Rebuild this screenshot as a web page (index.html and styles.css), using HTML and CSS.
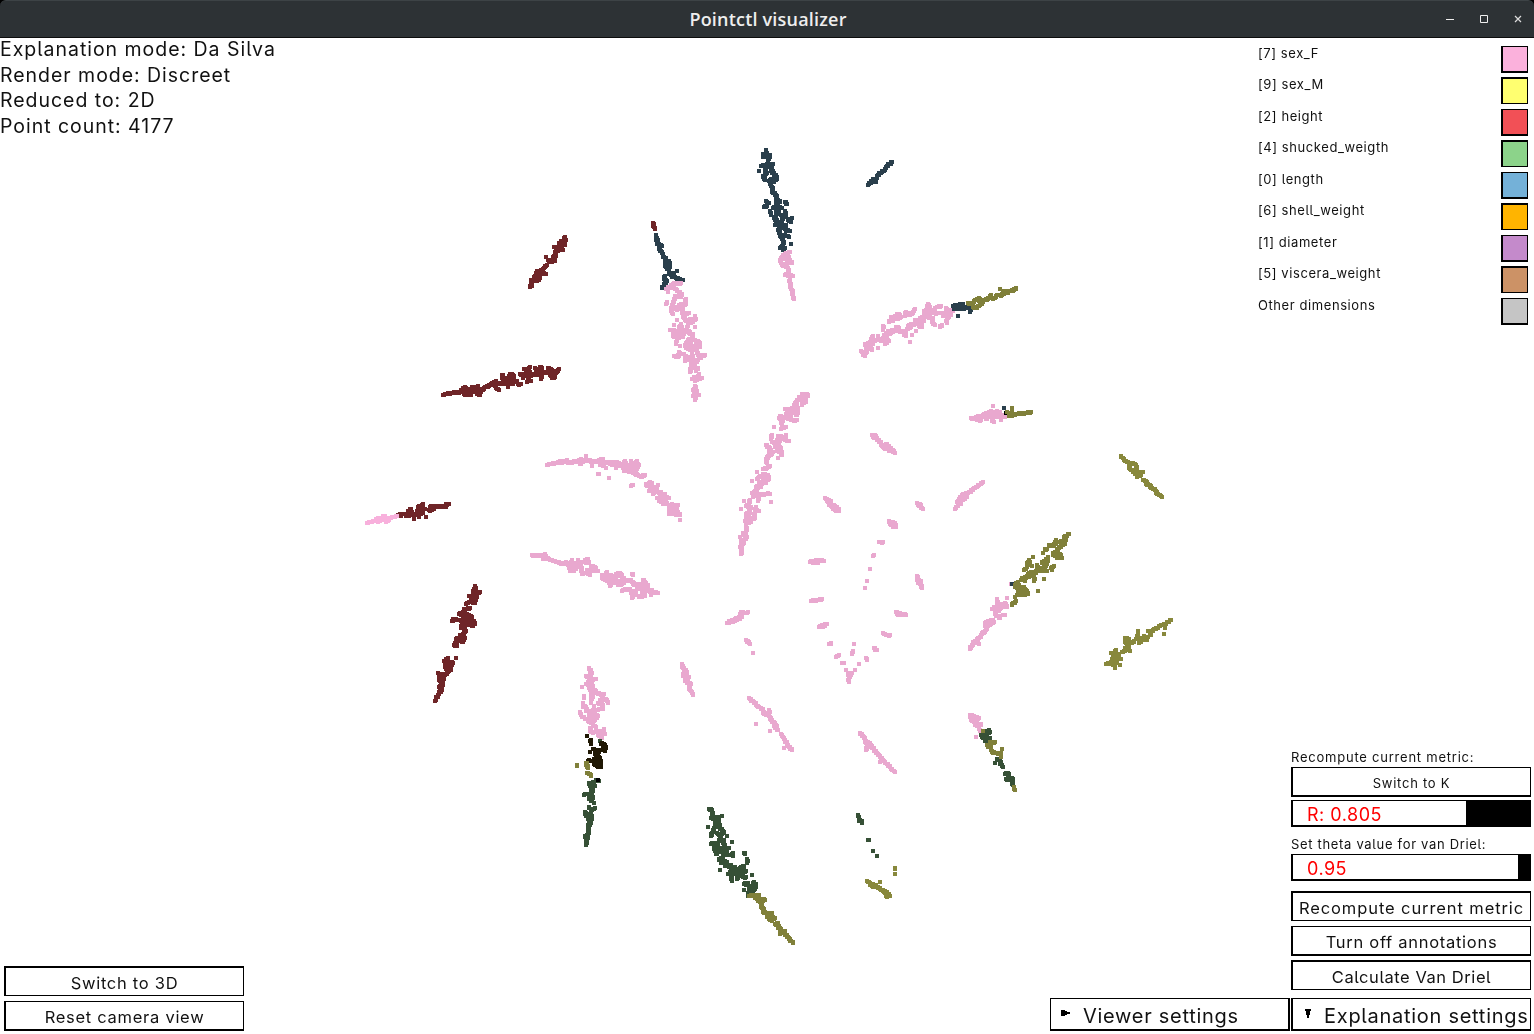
FILE: index.html
```html
<!DOCTYPE html>
<html lang="en">
<head>
<meta charset="utf-8">
<title>Pointctl visualizer</title>
<link rel="stylesheet" href="styles.css">
</head>
<body>
<div class="window">
  <header class="titlebar">
    <h1 class="title">Pointctl visualizer</h1>
    <div class="controls">
      <svg width="10" height="10" viewBox="0 0 10 10"><path d="M1 5.5h8" stroke="#eee" fill="none"/></svg>
      <svg width="10" height="10" viewBox="0 0 10 10"><path d="M1.5 1.5h7v7h-7z" stroke="#eee" fill="none"/></svg>
      <svg width="10" height="10" viewBox="0 0 10 10"><path d="M2 2l6 6M8 2l-6 6" stroke="#ddd" stroke-width="1.2" fill="none"/></svg>
    </div>
  </header>
  <main class="viewer">
    <canvas class="plot" id="plot" width="1534" height="996"></canvas>
    <section class="left">
      <div class="status">
        <p>Explanation mode: Da Silva</p>
        <p>Render mode: Discreet</p>
        <p>Reduced to: 2D</p>
        <p>Point count: 4177</p>
      </div>
      <div class="camera">
        <button class="btn odd">Switch to 3D</button>
        <button class="btn">Reset camera view</button>
      </div>
    </section>
    <section class="right">
      <ul class="legend">
        <li><span>[7] sex_F</span><i class="swatch pink"></i></li>
        <li><span>[9] sex_M</span><i class="swatch yellow"></i></li>
        <li><span>[2] height</span><i class="swatch red"></i></li>
        <li><span>[4] shucked_weigth</span><i class="swatch green"></i></li>
        <li><span>[0] length</span><i class="swatch blue"></i></li>
        <li><span>[6] shell_weight</span><i class="swatch orange"></i></li>
        <li><span>[1] diameter</span><i class="swatch purple"></i></li>
        <li><span>[5] viscera_weight</span><i class="swatch brown"></i></li>
        <li><span>Other dimensions</span><i class="swatch grey"></i></li>
      </ul>
      <div class="settings">
        <p class="label">Recompute current metric:</p>
        <button class="btn small">Switch to K</button>
        <div class="slider radius"><span>R: 0.805</span></div>
        <p class="label theta-label">Set theta value for van Driel:</p>
        <div class="slider theta"><span>0.95</span></div>
        <div class="actions">
          <button class="btn odd recompute">Recompute current metric</button>
          <button class="btn">Turn off annotations</button>
          <button class="btn odd calculate">Calculate Van Driel</button>
        </div>
      </div>
      <div class="menus">
        <button class="menu viewer-menu"><svg width="9" height="9" viewBox="0 0 9 9" shape-rendering="crispEdges"><path d="M0 0h4v1h2v1h3v2H6v1H4v1H0z"/></svg><span>Viewer settings</span></button>
        <button class="menu explain-menu"><svg width="7" height="11" viewBox="0 0 7 11" shape-rendering="crispEdges"><path d="M0 0h6v2H5v4H4v3H2V6H1V2H0z"/></svg><span>Explanation settings</span></button>
      </div>
    </section>
  </main>
</div>
<script src="plot.js"></script>
</body>
</html>
```
FILE: styles.css
```css
* { box-sizing: border-box; margin: 0; padding: 0; }
body { background: #fff; color: #111; font-family: Inter, "Liberation Sans", sans-serif; font-feature-settings: "cv05"; overflow: hidden; }
.window { width: 1534px; height: 1034px; display: flex; flex-direction: column; background: #000; }
.titlebar { height: 38px; flex: none; display: grid; grid-template-columns: 1fr auto 1fr; align-items: center; background: #2d3235; border-top: 1px solid #3d4346; border-bottom: 1px solid #0c0d0d; border-radius: 6px 6px 0 0; }
.title { grid-column: 2; font: 600 18px/36px "Open Sans", sans-serif; color: #eee; letter-spacing: 0.2px; margin-left: 2px; }
.controls { justify-self: end; display: flex; gap: 24px; padding-right: 11px; }
.controls svg { display: block; }
.viewer { flex: 1; position: relative; display: flex; justify-content: space-between; background: #fff; }
.plot { position: absolute; left: 0; top: 0; }
.left, .right { position: relative; display: flex; flex-direction: column; justify-content: space-between; padding-bottom: 3px; }
.status { font-size: 19.5px; line-height: 25.5px; letter-spacing: 0.97px; margin-top: -1px; }
.status p { white-space: nowrap; }
.camera { display: flex; flex-direction: column; gap: 5px; padding-left: 4px; }
.btn { display: flex; align-items: center; justify-content: center; width: 240px; height: 30px; background: #fff; border: solid #000; border-width: 1px 1px 2px 2px; font: inherit; font-size: 16.5px; letter-spacing: 0.72px; color: #111; white-space: nowrap; padding-top: 3px; }
.btn.odd { border-width: 2px 1px 1px 2px; }
.btn.small { font-size: 13px; letter-spacing: 0.75px; }
.btn.recompute { letter-spacing: 0.9px; }
.btn.calculate { letter-spacing: 0.55px; }
.right { align-items: flex-end; padding-right: 3px; }
.legend { list-style: none; width: 273px; padding: 8px 3px 0 0; font-size: 13px; letter-spacing: 0.58px; }
.legend li { display: flex; justify-content: space-between; align-items: flex-start; height: 31px; }
.legend li:nth-child(even) { height: 32px; }
.legend span { line-height: 15px; }
.swatch { width: 27px; height: 27px; border: solid #000; border-width: 1px 1px 2px 2px; }
.legend li:nth-child(even) .swatch { border-width: 2px 1px 1px 2px; }
.pink { background: #fbb1dc; }
.yellow { background: #ffff70; }
.red { background: #f25056; }
.green { background: #8cd38a; }
.blue { background: #74b1d8; }
.orange { background: #ffb400; }
.purple { background: #c48acb; }
.brown { background: #cc9266; }
.grey { background: #c5c5c5; }
.settings { width: 240px; margin-top: auto; margin-bottom: 8px; }
.label { font-size: 13px; line-height: 18px; letter-spacing: 0.77px; white-space: nowrap; margin-bottom: 1px; }
.theta-label { margin-top: 8px; letter-spacing: 0.68px; }
.slider { height: 27px; border: solid #000; border-width: 1px 1px 2px 2px; padding-left: 14px; color: #f00; font-size: 18px; line-height: 28px; letter-spacing: 0.5px; }
.slider.radius { margin-top: 3px; background: linear-gradient(90deg, #fff 173px, #000 173px); }
.slider.theta { background: linear-gradient(90deg, #fff 225px, #000 225px); }
.actions { display: flex; flex-direction: column; gap: 4.5px; margin-top: 10px; }
.menus { display: flex; gap: 1px; }
.menu { width: 240px; height: 33px; display: flex; align-items: center; background: #fff; border: solid #000; border-width: 1px 1px 2px 2px; font: inherit; font-size: 20px; letter-spacing: 0.72px; color: #111; white-space: nowrap; }
.menu span { padding-top: 4px; }
.viewer-menu { border-width: 1px 2px 2px 1px; padding-left: 10px; gap: 13px; }
.explain-menu { padding-left: 12px; gap: 12px; }
```
FILE: plot.js
```js
// Each group: colour, origin in window pixels, strands. Strand coordinates are
// thirds of a pixel from the origin; a lone coordinate is a single point.
const PINK = '#e9a8cf', NAVY = '#2a3f4c', RED = '#6f2528', OLIVE = '#80803a', OLIVE2 = '#88883c', GREEN = '#365036';
const groups = [
[NAVY,640,140,"378,30 378,42 370,42 370,50 384,46 390,45 384,60;363,78 378,74 398,72 390,82 398,92;378,78 376,90 380,98 370,108 376,120;357,93;392,92 402,102 410,112 402,126 394,118 388,124 396,140 396,150 400,158 410,168 410,182 420,182 408,196 400,204;378,184 386,190;372,201 380,198;435,186 441,192;426,203 414,200;390,213 394,225;408,214 418,214 408,228 402,234 414,246 405,255;435,213 437,226 424,226 437,232;456,234 444,240 453,245;428,238 422,248 427,262 416,264 418,280 422,290 430,300 432,310;438,256 437,272 449,273;432,284 446,291;453,312;430,316 421,324 436,324 430,330"],
[PINK,640,140,"450,336 436,342 426,350 421,363 430,378 440,378;446,350 450,362 455,370 442,366 440,352;444,384 447,394 436,405 448,405 459,408;449,414 451,440 456,450 458,470 461,478"],
[RED,640,140,"39,248 40,256 43,260 45,267"],
[NAVY,640,140,"48,285 48,300 54,300 52,312 66,318 56,322 62,334 68,342 70,352 78,354 74,364 76,378 82,388 90,380 87,364;86,398 98,405 110,416 128,420;111,393;98,400 96,412;75,408 74,420 81,423 72,435 66,444"],
[PINK,640,140,"78,447 90,440 98,432 110,429 124,429;84,456;98,444 108,448 116,456 126,462 124,470;112,468 104,472 102,482 98,490 92,510 98,522;80,486 77,492;138,478 137,492 126,500 116,508 104,508 124,492;128,502 126,514 130,524 146,519;130,530 138,542 150,545;111,540;165,529 165,540 154,548 148,540 156,536;102,555;90,570 102,570 102,590 98,580;124,552 118,562 126,562 118,574 116,582;165,561;144,555 140,566 134,574 146,574 150,582 158,582 160,594;132,578 128,590;120,590 110,598 107,612;120,618;146,596 140,606 134,618 144,626;152,604 150,616 166,620 156,632 148,628;166,600 178,606 180,622;168,612 170,634 176,648 182,654 186,646 195,645;118,636 118,644 114,651 102,648;128,642 138,648 134,663;150,650 148,660;156,640 158,655 152,668 156,680 150,690 150,696;168,666 174,660;168,684 174,684 168,694;166,672;177,702 176,714 187,714;156,717 166,712 170,720 164,722;165,738 168,748 160,750 166,760 176,765;172,752;158,768 168,772 165,780"],
[NAVY,640,140,"756,66 748,72 740,78 734,90 722,98 714,106 708,120 700,116 708,126 694,124 684,134"],
[PINK,640,140,"664,632 674,648 668,640 678,638 682,624 676,612 690,608 694,596 700,588;696,630 688,620 698,612;714,588 714,600 702,600 696,608;728,594 722,604 740,598 746,604 734,612 740,604;714,624;732,590 740,578 752,572 762,574 776,572 786,576 796,572 798,588 792,584;730,570 730,558;744,576 742,586 752,580;746,546 754,540 752,532 762,530 770,524 778,522 784,532 772,536;758,544;768,560 776,564;798,516 796,528 806,520 816,522 824,508 820,520 802,524;816,585;810,606;828,573;812,562 800,566 812,552 820,556 828,552 838,548;824,540 836,540 846,532 852,540 844,552 846,562 836,558;852,522 852,512 862,512 864,492 870,504 870,520 864,530 858,522 872,534 880,534 876,546 884,556;882,510 890,502 902,498;880,520 892,520;900,561 906,555;920,548 920,536 926,530 934,522;918,504 920,512 930,512 940,512;900,520 912,520 908,528 920,524"],
[NAVY,640,140,"939,498 968,492 954,500 966,506 980,500 990,506 990,516;942,508 950,504 976,504;954,528"],
[OLIVE,640,140,"984,490 998,492 1002,484 1018,474 1016,484 1030,486 1020,494 1008,504 1000,500;1030,480 1044,478 1054,464 1050,474 1066,474 1072,464 1086,466 1092,460;1080,447;1090,452 1094,460 1104,458 1108,452 1122,450 1128,444"],
[RED,360,210,"615,80 612,90 618,90 606,92 598,100 602,108 615,104 596,108;609,120;582,111 596,112 594,122 584,126 588,138 580,142 586,152 570,156 564,150;558,141;560,164 552,174 548,180 536,182 528,188 540,190 558,192;522,200 534,200 540,204 530,212 520,212 514,210 516,224 510,230"],
[RED,360,210,"249,555 262,551 276,549 290,546 298,549 306,540 315,531 318,540 312,552 324,552 333,555;336,530 336,542 354,528 352,540 346,546 360,543 360,555 350,552;322,546 332,536 344,536 368,540 374,531 386,528 394,522 408,513 404,526 408,534 417,540;412,520 428,522 436,516 428,506 426,498 430,494;438,510 446,500 451,492 460,496 462,508 450,508 444,520 432,520;444,532;438,522 450,520 460,522 456,514 472,513;474,522 484,522;480,492 492,494 488,504;492,477 504,480 510,471;500,490 510,486 508,500 498,492;501,516;513,513;504,504 516,492 530,492 528,480 524,474;534,492 543,496 543,507;540,471 546,474 540,484 550,490 562,486 570,484 564,474 574,477 576,490 570,496 578,500 576,504 585,500;588,490 582,486;597,477 592,486 586,482"],
[RED,360,210,"267,882 258,882 258,890 246,888 234,890 222,888 212,888 214,900 206,900 222,896;189,882 188,890 174,890 184,900 170,904 172,912 160,912 154,904 153,897 144,906 138,918 150,916 164,912;180,912 189,909;162,927;177,921;198,921;196,898;130,913 120,912 122,918 114,914"],
['#f8b0dc',360,210,"21,939 32,936 42,934 54,924 54,936 66,930 70,918 78,924 78,936 84,932 90,924 100,921 111,917"],
[PINK,360,210,"561,765 572,762 584,760 594,758 600,752 606,760 620,750 620,757 640,756 656,754 662,748 660,762 668,756;678,738;666,750 680,750 696,754 714,754 728,746 730,756 720,764 732,766;696,768;738,774;738,758 752,756 770,756 778,762 790,764 795,753 798,768;768,774;750,762 764,764 784,768 796,784 808,776 820,766 812,754;831,753 828,764 837,765 830,778 818,786 826,792 834,796 842,800 855,795;806,766 800,782 812,786 822,774;714,792 717,792;747,804;813,828 819,825;858,822 860,828 870,816 876,822 874,832 882,832;894,825;868,843 880,838 890,836 886,844 879,852;892,846 904,846 900,856 914,852;891,864 902,864 914,862 927,864;898,874 910,870 920,878 912,882 904,876;936,882 928,890 942,890 954,885;928,900 940,896 950,900 960,915 948,914 938,906 928,912;946,908;960,930"],
[PINK,420,540,"336,45 350,46 366,48 375,43 376,54 370,56 388,56 398,62 412,66 428,72 438,66 444,74;456,60 454,70 446,78 450,92 462,92 456,84 468,86 474,78 462,74 468,68;474,60;480,72 488,66 504,58 504,68 494,66;482,92;486,102 500,96 510,104;502,90 516,90 514,78 526,80 524,92 534,94;480,78 486,88;546,105 548,118 560,120 568,126 570,137 576,124 566,114 560,104 561,96;572,104 578,114 588,106 594,100 600,100 606,104 592,108 582,122;606,120 612,114;594,136 606,132 618,122 630,120 640,126 642,134;635,102 639,104;588,128 600,122;606,153 618,147 630,147;632,160 640,154 648,160 640,166 636,174;654,132 660,138 650,144 664,144 672,150 666,156;669,120 676,126 684,138 682,148 674,156 668,168 658,171;692,150 698,156 714,159;675,168;693,165;662,132 672,140 690,156"],
[RED,420,540,"165,138 166,148 158,152 166,156 180,156;147,168 160,168 172,166 168,176 164,180 152,180 164,190;138,192 148,186;150,204 138,207 132,207;136,216 118,222 130,224;96,243 102,237 114,240 126,240 138,234 128,230;140,222 154,228 156,240 166,249 156,258 142,252 130,250 122,264 134,262 136,276 130,282;142,244 148,236 134,244 148,256;120,286 134,294 130,306 116,300 106,308 104,318 112,316;108,296 118,298;108,354;84,354 78,360 72,362 86,366 100,368 94,376 74,374 78,386 94,386 82,398 76,404 66,402;84,380;54,399;58,412 70,408 70,420 58,420 66,430 70,436 58,440 66,450 56,460 60,452 54,468 48,476 45,483"],
[PINK,420,540,"507,384 512,394 514,404 508,414 498,408;527,417 516,420 506,424 504,436 516,430 520,444 508,444 514,456;486,441;499,432;492,468 492,474;524,450 528,458 540,462 552,462 546,474 540,484 552,480 558,478 564,489;512,468 520,462 514,480 512,490;490,490 488,500 498,500 498,512;522,498;534,490 546,492 549,506;480,516 484,526 488,532 498,537 508,537 508,524 514,512 526,512 536,508;520,524 534,528 524,540 512,548 504,544 518,534;518,556 528,562;510,564 512,576 524,576 534,572 542,576;552,567 548,578 556,582;534,584 542,590 546,594"],
[GREEN,420,540,"541,603"],
['#201804',420,540,"501,588;512,600 514,612;544,611 552,612 558,621 554,632 548,624;518,627 528,632 540,630 532,640 524,642;510,636;504,662 518,664 528,652 540,654 532,664 544,670 542,680 534,680 522,672 544,662;534,644 534,676"],
[OLIVE,420,540,"471,674 471,679;498,668 502,676 504,684;497,672;500,700 510,702 513,708"],
[GREEN,420,540,"528,719 537,723;510,728 522,728;507,729 512,740 524,738 512,750 520,746 512,760 508,776 520,770 512,784;492,765 498,763;522,789;507,801 514,810 525,804;495,816 498,828 510,826 514,820 516,838 506,832 510,850 514,846 504,860 504,884 494,891 504,890 498,902 498,914"],
['#000',420,540,"534,720"],
[PINK,420,540,"786,372 788,384 794,390 802,396 798,410 806,412 798,422 806,430 812,432 806,446 812,452 818,462 820,465;792,396 790,408;796,412 796,422"],
[PINK,690,380,"335,42 350,43 354,48 342,54 330,50 328,58 348,62 336,74;322,60 316,70 312,80 304,88 286,87 298,92;320,76 324,90 322,106 314,96 300,98 290,96 286,110 298,116 312,122 322,120;304,108;272,108 266,114 280,120 274,130 280,140 274,147 288,141;252,141;246,165 243,177;288,165 282,176 290,182 297,183;264,168 276,170 260,180 270,182 262,192 246,186;228,196 240,203 230,200;256,200 272,204 260,214 272,214 276,225;264,234;244,210 236,216 250,216 246,222 234,228 228,243 232,249;240,258 232,264 220,268;201,276;186,303;218,282 234,286 238,298 228,300 218,292 206,290 202,296;208,308 216,306 214,318 206,314 198,322 212,322;228,310;186,340 198,344 214,342 228,342 240,341;200,330 192,336 190,350;204,356 204,364 208,350;242,366;162,363;153,388;180,360 176,374 168,378 184,380 176,390 180,400 168,402 178,408;198,381 196,392 207,393;192,402 192,417;168,410 180,414 174,428 184,426 166,424;168,436 168,458 158,460 170,472 162,480 152,484;150,471;162,490 152,494 154,510 153,522"],
[PINK,690,380,"546,165 554,165 560,176 572,186 576,198 588,198 582,204 598,208 606,212 614,220;548,171 558,174;572,192 588,204 600,214;588,192 600,204 612,213;406,354 412,362 420,372 430,376 436,388 446,392;411,356 424,366;416,370 428,384 438,392;432,376 446,388;681,369 688,378 698,387;684,372 692,376;596,424 604,430 610,436 618,440;600,432 608,440;608,426 617,436;567,486 579,486;551,525 550,528;540,567;531,603;525,624;879,306 868,314 860,320 850,328 840,336 828,340 822,350 814,356 808,366 804,376 796,386;818,342 802,366 812,372;832,348 820,360;360,546 372,542 386,542 402,543;370,548 384,548;363,663 374,661 386,659 396,657;681,588 682,600 694,602 684,608 694,614 696,624;618,697 630,700 648,705;621,702 632,704;579,760 590,765 600,765;388,740 400,736 410,732;394,740 404,738;418,793 424,790;438,830 446,825;457,849 461,849;492,792;489,813 486,822;552,804 560,811;528,834 531,840;507,853;495,870;486,880 480,886 474,880 480,892 476,892 477,906;468,870;112,729 124,722 134,718 144,714 152,706 154,696 164,700 174,697;146,710;128,726 144,718 156,712;168,780 178,786 180,792;170,786 176,790;189,819"],
[PINK,690,380,"843,114 856,114 864,108 876,108;862,120 874,120;880,106 892,100 904,94 906,106 890,110 888,118;909,78;906,120 911,126;912,96 930,96 920,102 914,112 928,108 938,104;933,120;936,110 946,112;922,94 908,114;880,112 900,104 916,106"],
[NAVY,690,380,"942,84"],
['#000',690,380,"948,99"],
[OLIVE,690,380,"966,84;951,96;966,96 964,102;957,108 968,104 980,102 994,100 1008,99 1022,96"],
[PINK,950,440,"142,478 142,490;171,474;127,507 138,500 150,494 164,490 172,500 160,498 150,506 138,504 136,514 146,512;136,522 142,528 150,534;160,525 166,525;128,540 118,542 108,546 106,558 120,554 132,546;110,566 104,576 96,578 92,590 84,594 80,602 70,606 82,610 88,612;70,614 64,620 60,627;183,432"],
[NAVY,950,440,"186,432"],
[OLIVE,950,440,"357,282 348,288 342,292 348,300 340,304 330,306;318,300 316,312 310,318;297,315 306,318;345,312 336,316 326,324 320,332;292,327 284,327;280,339;310,340 322,336 332,344 324,352 336,354 318,348 310,346;320,354;249,351;238,360 232,370 240,366 230,382 222,390;246,378;294,352 288,360 294,362 276,366 282,376 292,372 276,384 284,390 290,393 270,390;262,374 262,388 258,398;312,378 304,384 306,390;282,417;264,453;246,396 234,402 248,402 230,412 218,414 212,420;252,410 252,424;226,422;204,426 196,434 208,434 200,444 212,444 222,442 204,452 216,452 230,452 234,462 222,462 208,460 218,466;196,440 224,446;202,466;196,471;198,484 190,490 186,495"],
[OLIVE2,950,440,"513,48 518,54 526,62 536,70 548,70 558,74 562,84 558,92 568,98 578,96;536,80 544,90 552,96 560,104 562,112 572,106;578,120 588,124 590,134 600,134 602,144 612,146 618,152 620,162 630,166 635,171"],
[OLIVE2,950,440,"663,540 654,546 644,552 632,556 622,564 610,570 600,578 604,586;642,582;645,564;594,573;564,573;564,586 558,596 566,596 578,596 590,600 582,588 574,602 567,608;594,590;552,602 546,610 536,604 528,608 525,594 538,598;530,618 538,616 526,624 540,633;524,634 516,636;498,630 496,642 508,644 504,652 494,650 486,656;483,639;513,657;468,672 480,668 492,664 500,662 496,672 484,672;495,684;510,675"],
[PINK,690,680,"178,54 188,64 198,74 208,82 220,90 222,102 232,104 240,110 242,120 254,128 260,138 252,138 264,150;272,162 280,170 284,182 292,188 296,200 306,209;237,90 237,104;230,98;198,132;240,153;282,204"],
[PINK,690,680,"510,159 518,168 526,178 528,190 538,192 530,202 528,210;534,186 542,196 552,208 560,220 570,228 576,238 570,246;580,240 590,252 600,262 614,276"],
[GREEN,690,680,"874,166 884,164 896,150 898,158 888,160;876,172 888,176 900,174 886,184"],
[PINK,690,680,"845,105 840,110 852,108 866,114 856,116 844,120 856,126 864,132 874,132 862,138;866,144 870,152;858,171;856,136"],
[GREEN,690,680,"920,238 930,240 930,250 938,260;915,249;945,282 954,280 956,292 948,297 960,300 966,294 966,306 968,314"],
[OLIVE,690,680,"880,152;900,186 915,187;892,194 902,200 904,210 910,218 922,220 932,220 932,230;894,200;936,207;972,322 975,329"],
[GREEN,690,680,"58,387 64,387 68,398 66,408 64,414 76,414 84,410 80,420 88,424 76,430 90,434 74,440 90,440;96,408;54,441;72,444 66,458 63,468;90,444 98,454 102,460 88,464 82,459;111,468;92,472 88,480 102,480 100,490;63,492 76,490 84,494 74,500 72,508 84,506 96,504 108,504 118,504;126,486;76,514 90,512 78,522;104,494 102,512 112,514 98,522 106,524;118,525;128,520 129,528;98,532 86,540 96,544 92,548;104,542 112,548 104,558;162,519 165,522;171,537 171,550;90,570;124,554 116,562 128,562 136,560 124,570 136,574;150,564 160,558 158,566 148,566;114,582 126,582 124,594 126,603;140,584 150,580 140,598;132,578 146,588;168,572 160,580 154,584;160,592 168,592;120,576 138,580;186,585;162,612 174,608 168,616;192,606 188,614 198,620 180,620 176,628 192,630 198,612;162,630;176,636 174,648;190,640 184,634"],
[OLIVE,690,680,"177,648 190,646 208,646 194,654 206,658 224,660 204,664 216,666;216,674 214,682 222,688 218,696 228,700;236,700 246,700 232,712 242,710 254,714 244,720 236,716 246,724;264,728 256,732 266,738 264,744;270,744 274,754 284,754 270,762;286,764 296,774 304,784 309,789"],
[GREEN,690,680,"504,405 508,414 506,420 516,422 515,428;508,424;534,480 537,480;549,513;561,528"],
[OLIVE2,690,680,"615,564 615,568;615,582;531,603 540,610 546,618 560,620 570,628 580,632 588,642 600,648 588,648;570,606;550,612 576,630 598,642"]
];
const ctx = document.getElementById('plot').getContext('2d');
const SIZE = 4, TITLEBAR = 38;
for (const [color, ox, oy, data] of groups) {
  ctx.fillStyle = color;
  const dot = (x, y) => ctx.fillRect(Math.round(ox + x / 3) - SIZE / 2, Math.round(oy + y / 3) - SIZE / 2 - TITLEBAR, SIZE, SIZE);
  let spread = 1.5;
  for (const strand of data.split(';')) {
    const pts = strand.split(' ').map(p => p.split(',').map(Number));
    dot(pts[0][0], pts[0][1]);
    for (let i = 1; i < pts.length; i++) {
      const [x0, y0] = pts[i - 1], [x1, y1] = pts[i];
      const len = Math.hypot(x1 - x0, y1 - y0);
      const steps = Math.max(1, Math.ceil(len / 4));
      // Points between two knots scatter to alternating sides of the strand.
      for (let s = 1; s < steps; s++) {
        spread = -spread;
        dot(x0 + (x1 - x0) * s / steps + spread * (y1 - y0) / len, y0 + (y1 - y0) * s / steps - spread * (x1 - x0) / len);
      }
      dot(x1, y1);
    }
  }
}
```
